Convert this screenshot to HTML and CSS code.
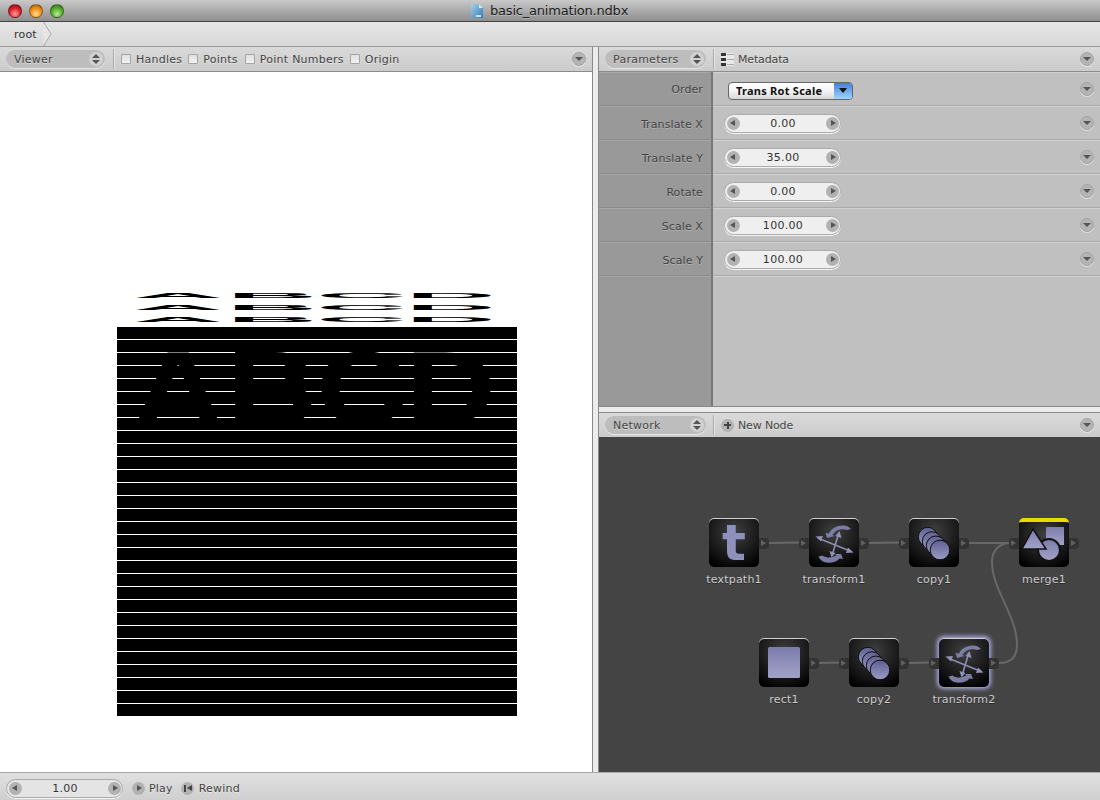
FILE: index.html
```html
<!DOCTYPE html>
<html lang="en">
<head>
<meta charset="utf-8">
<title>basic_animation.ndbx</title>
<link rel="stylesheet" href="styles.css">
</head>
<body>
<svg class="defs" width="0" height="0" aria-hidden="true">
  <defs>
    <linearGradient id="ink" x1="0" y1="0" x2="0" y2="1">
      <stop offset="0" stop-color="#7c7cac"/>
      <stop offset="1" stop-color="#a2a2c8"/>
    </linearGradient>
    <linearGradient id="disc" x1="0" y1="0" x2="0" y2="1">
      <stop offset="0" stop-color="#5f5f92"/>
      <stop offset="1" stop-color="#9c9cc6"/>
    </linearGradient>
    <linearGradient id="doc" x1="0" y1="0" x2="1" y2="1">
      <stop offset="0" stop-color="#a9d0ea"/>
      <stop offset="1" stop-color="#2f7fb5"/>
    </linearGradient>
    <symbol id="i-transform" viewBox="0 0 50 49">
      <g fill="#7c7ca4">
        <path d="M18 20L16.500 15L20 15.500C22 10.500 28 7.500 34 7.500C37 7.500 40 8.500 42 11L38 12C32 10 26 12 23.500 17L25.500 18z"/>
        <path d="M32 36L34 41L30.500 40.500C27 45 19 45.500 15 44C12.500 43 10.500 41 9.500 38.500L13.500 37.500C18 40.500 24 40 27.500 37L25.500 36z"/>
      </g>
      <g fill="none" stroke="#8c8cb4" stroke-width="1.600">
        <path d="M10 20.500L41 33"/>
        <path d="M29.500 16L23.500 36"/>
      </g>
      <g fill="#9090b8">
        <path d="M6.500 18.500L14 18L12 23.500z"/>
        <path d="M44.500 34.500L37 35L39 29.500z"/>
        <path d="M30.500 13L32.500 20L26.500 18z"/>
        <path d="M22.500 39.500L20.500 33L26.500 35z"/>
      </g>
    </symbol>
    <symbol id="i-copy" viewBox="0 0 50 49">
      <g fill="url(#disc)" stroke="#0d0d0d" stroke-width="1">
        <circle cx="18.800" cy="18.800" r="9.500"/>
        <circle cx="22.800" cy="23.200" r="9.500"/>
        <circle cx="26.800" cy="27.500" r="9.500"/>
        <circle cx="31" cy="32" r="9.800"/>
      </g>
    </symbol>
  </defs>
</svg>

<div class="window">
  <header class="titlebar">
    <div class="lights">
      <span class="light light-red"></span>
      <span class="light light-amber"></span>
      <span class="light light-green"></span>
    </div>
    <svg class="doc-icon" width="12" height="15" viewBox="0 0 12 15">
      <path d="M0 1h8l4 4v10H0z" fill="url(#doc)"/>
      <path d="M8 1v4h4z" fill="#d5e8f4"/>
      <path d="M5 12h5v2H5z" fill="#cfe2ef"/>
    </svg>
    <span class="title-text">basic_animation.ndbx</span>
  </header>

  <nav class="pathbar">
    <span class="crumb">root</span>
    <svg class="crumb-sep" width="9" height="24" viewBox="0 0 9 24">
      <path d="M0.500 0L8 12L0.500 24" fill="#e6e6e6" stroke="#a8a8a8"/>
    </svg>
  </nav>

  <main class="panes">
    <section class="pane-left">
      <div class="panehead">
        <div class="select select-viewer"><span>Viewer</span><i class="updown"></i></div>
        <span class="divider"></span>
        <label class="check"><i class="box"></i>Handles</label>
        <label class="check check-tight"><i class="box"></i>Points</label>
        <label class="check"><i class="box"></i>Point Numbers</label>
        <label class="check check-tight"><i class="box"></i>Origin</label>
        <i class="menu-btn menu-end"></i>
      </div>
      <svg class="viewer" width="592" height="700" viewBox="0 72 592 700">
        <rect x="0" y="72" width="592" height="700" fill="#fff"/>
        <rect x="117" y="327" width="400" height="389" fill="#000"/>
        <path class="scanlines" d="M117 339.500H517M117 352.500H517M117 365.500H517M117 378.500H517M117 391.500H517M117 404.500H517M117 417.500H517M117 430.500H517M117 443.500H517M117 456.500H517M117 469.500H517M117 482.500H517M117 495.500H517M117 508.500H517M117 521.500H517M117 534.500H517M117 547.500H517M117 560.500H517M117 573.500H517M117 586.500H517M117 599.500H517M117 612.500H517M117 625.500H517M117 638.500H517M117 651.500H517M117 664.500H517M117 677.500H517M117 690.500H517M117 703.500H517"/>
        <text class="stretch" transform="translate(0 298) scale(1.25 0.075)" x="106.500 181.500 253 324.500">ABCD</text>
        <text class="stretch" transform="translate(0 310) scale(1.25 0.075)" x="106.500 181.500 253 324.500">ABCD</text>
        <text class="stretch" transform="translate(0 322) scale(1.25 0.075)" x="106.500 181.500 253 324.500">ABCD</text>
        <text class="stretch" transform="translate(0 424) scale(1.25 1.03)" x="106.500 181.500 253 324.500">ABCD</text>
      </svg>
    </section>

    <div class="vsplit"></div>

    <section class="pane-right">
      <div class="panehead">
        <div class="select select-params"><span>Parameters</span><i class="updown"></i></div>
        <span class="divider"></span>
        <svg class="meta-icon" width="13" height="13" viewBox="0 0 13 13">
          <rect width="13" height="13" fill="#e8e8e8"/>
          <path d="M0 0h5v3H0zM0 5h5v3H0zM0 10h5v3H0z" fill="#333"/>
          <path d="M6 1h7v1H6zM6 6h7v1H6zM6 11h7v1H6z" fill="#aaa"/>
        </svg>
        <span class="head-label">Metadata</span>
        <i class="menu-btn menu-end"></i>
      </div>

      <div class="params">
        <div class="param">
          <div class="param-label">Order</div>
          <div class="param-value">
            <div class="dropdown"><span>Trans Rot Scale</span><i class="dropdown-arrow"></i></div>
            <i class="menu-btn menu-end"></i>
          </div>
        </div>
        <div class="param">
          <div class="param-label">Translate X</div>
          <div class="param-value">
            <div class="stepper"><i class="round left"></i><span>0.00</span><i class="round right"></i></div>
            <i class="menu-btn menu-end"></i>
          </div>
        </div>
        <div class="param">
          <div class="param-label">Translate Y</div>
          <div class="param-value">
            <div class="stepper"><i class="round left"></i><span>35.00</span><i class="round right"></i></div>
            <i class="menu-btn menu-end"></i>
          </div>
        </div>
        <div class="param">
          <div class="param-label">Rotate</div>
          <div class="param-value">
            <div class="stepper"><i class="round left"></i><span>0.00</span><i class="round right"></i></div>
            <i class="menu-btn menu-end"></i>
          </div>
        </div>
        <div class="param">
          <div class="param-label">Scale X</div>
          <div class="param-value">
            <div class="stepper"><i class="round left"></i><span>100.00</span><i class="round right"></i></div>
            <i class="menu-btn menu-end"></i>
          </div>
        </div>
        <div class="param">
          <div class="param-label">Scale Y</div>
          <div class="param-value">
            <div class="stepper"><i class="round left"></i><span>100.00</span><i class="round right"></i></div>
            <i class="menu-btn menu-end"></i>
          </div>
        </div>
        <div class="param param-fill">
          <div class="param-label"></div>
          <div class="param-value"></div>
        </div>
      </div>

      <div class="hsplit"></div>

      <div class="panehead panehead-net">
        <div class="select select-params"><span>Network</span><i class="updown"></i></div>
        <span class="divider"></span>
        <i class="round plus"></i>
        <span class="head-label">New Node</span>
        <i class="menu-btn menu-end"></i>
      </div>

      <div class="network">
        <svg class="wires" width="501" height="335" viewBox="599 437 501 335">
          <path d="M769 543L799 542.500"/>
          <path d="M869 543L899 542.500"/>
          <path d="M969 543L1009 543"/>
          <path d="M819 663L839 662.500"/>
          <path d="M909 663L929 662.500"/>
          <path d="M999 663C1011 663 1017 657 1017 645C1017 615 992 590 992 562C992 550 1000 543 1010 543"/>
        </svg>

        <div class="node n-textpath">
          <div class="tile">
            <span class="t-glyph">t</span>
            <i class="port port-out"></i>
          </div>
          <span class="node-label">textpath1</span>
        </div>
        <div class="node n-transform1">
          <div class="tile">
            <svg class="glyph" width="50" height="49"><use href="#i-transform"/></svg>
            <i class="port port-in"></i><i class="port port-out"></i>
          </div>
          <span class="node-label">transform1</span>
        </div>
        <div class="node n-copy1">
          <div class="tile">
            <svg class="glyph" width="50" height="49"><use href="#i-copy"/></svg>
            <i class="port port-in"></i><i class="port port-out"></i>
          </div>
          <span class="node-label">copy1</span>
        </div>
        <div class="node n-merge">
          <div class="tile tile-rendered">
            <svg class="glyph" width="50" height="49" viewBox="0 0 50 49">
              <rect x="27" y="9" width="18" height="18" fill="url(#ink)"/>
              <circle cx="30" cy="32" r="11" fill="url(#ink)" stroke="#111" stroke-width="2"/>
              <path d="M3 31L14 11L27 31z" fill="url(#ink)" stroke="#111" stroke-width="1.500"/>
            </svg>
            <i class="port port-in"></i><i class="port port-out"></i>
          </div>
          <span class="node-label">merge1</span>
        </div>
        <div class="node n-rect">
          <div class="tile">
            <svg class="glyph" width="50" height="49" viewBox="0 0 50 49"><rect x="9" y="9" width="32" height="31" rx="1.500" fill="url(#ink)"/></svg>
            <i class="port port-out"></i>
          </div>
          <span class="node-label">rect1</span>
        </div>
        <div class="node n-copy2">
          <div class="tile">
            <svg class="glyph" width="50" height="49"><use href="#i-copy"/></svg>
            <i class="port port-in"></i><i class="port port-out"></i>
          </div>
          <span class="node-label">copy2</span>
        </div>
        <div class="node n-transform2">
          <div class="tile tile-selected">
            <svg class="glyph" width="50" height="49"><use href="#i-transform"/></svg>
            <i class="port port-in"></i><i class="port port-out"></i>
          </div>
          <span class="node-label">transform2</span>
        </div>
      </div>
    </section>
  </main>

  <footer class="bottombar">
    <div class="stepper stepper-frame"><i class="round left"></i><span>1.00</span><i class="round right"></i></div>
    <i class="round right play-btn"></i><span class="foot-label">Play</span>
    <i class="round rewind rewind-btn"></i><span class="foot-label">Rewind</span>
  </footer>
</div>
</body>
</html>
```
FILE: styles.css
```css
* { box-sizing: border-box; }
html, body { margin: 0; padding: 0; }
body {
  width: 1100px;
  height: 800px;
  overflow: hidden;
  font: 11px "DejaVu Sans", sans-serif;
  color: #444;
}
i { display: block; font-style: normal; }
.defs { position: absolute; }

.window { display: flex; flex-direction: column; height: 800px; }

/* title bar */
.titlebar {
  flex: 0 0 22px;
  display: flex;
  align-items: center;
  padding-left: 8px;
  background: linear-gradient(#c9c9c9, #8e8e8e);
  border-bottom: 1px solid #444;
}
.lights { display: flex; gap: 7px; }
.light { width: 14px; height: 14px; border-radius: 50%; border: 1px solid rgba(0,0,0,.35); }
.light-red { background: radial-gradient(circle at 50% 75%, #ff9a9a, #d8202a 55%, #8e0f18); }
.light-amber { background: radial-gradient(circle at 50% 75%, #ffdf8a, #e88c18 55%, #a05a08); }
.light-green { background: radial-gradient(circle at 50% 75%, #b5ee8e, #55a82c 55%, #2e7015); }
.doc-icon { margin-left: 407px; }
.title-text { margin-left: 7px; font-size: 13px; letter-spacing: -.2px; color: #1c1c1c; text-shadow: 0 1px 0 rgba(255,255,255,.3); }

/* breadcrumb */
.pathbar {
  flex: 0 0 25px;
  display: flex;
  align-items: center;
  padding-left: 14px;
  background: linear-gradient(#e6e6e6, #d8d8d8);
  border-bottom: 1px solid #999;
}
.crumb { letter-spacing: .2px; color: #333; }
.crumb-sep { margin-left: 6px; }

/* panes */
.panes { flex: 1; display: flex; min-height: 0; }
.pane-left { flex: 0 0 592px; display: flex; flex-direction: column; }
.vsplit { flex: 0 0 7px; background: #ececec; border-left: 1px solid #888; border-right: 1px solid #888; }
.pane-right { flex: 1; display: flex; flex-direction: column; min-width: 0; }

.panehead {
  flex: 0 0 25px;
  display: flex;
  align-items: center;
  padding-left: 6px;
  background: linear-gradient(#dadada, #cbcbcb);
  border-bottom: 1px solid #8c8c8c;
  letter-spacing: .25px;
  text-shadow: 0 1px 0 rgba(255,255,255,.45);
}
.panehead-net { flex-basis: 24px; border-bottom: 0; }
.select {
  height: 18px;
  display: flex;
  align-items: center;
  justify-content: space-between;
  padding: 0 2px 0 8px;
  border-radius: 9px;
  background: #bdbdbd;
  box-shadow: 0 1px 0 rgba(255,255,255,.5);
}
.select-viewer { width: 99px; }
.select-params { width: 101px; }
.updown {
  position: relative;
  width: 14px;
  height: 14px;
  border-radius: 50%;
  background: #d2d2d2;
}
.updown::before, .updown::after {
  content: "";
  position: absolute;
  left: 3px;
  border-left: 4px solid transparent;
  border-right: 4px solid transparent;
}
.updown::before { top: 2px; border-bottom: 4px solid #555; }
.updown::after { bottom: 2px; border-top: 4px solid #555; }
.divider { width: 1px; height: 20px; margin-left: 8px; background: #aaa; box-shadow: 1px 0 0 #e6e6e6; }
.select-params + .divider { margin-left: 7px; }
.check { display: flex; align-items: center; margin-left: 7px; }
.check-tight { margin-left: 6px; }
.box {
  width: 10px;
  height: 10px;
  margin-right: 5px;
  background: linear-gradient(#e0e0e0, #f2f2f2);
  border: 1px solid #a5a5a5;
  border-radius: 1px;
}
.head-label { margin-left: 4px; letter-spacing: -.15px; }
.meta-icon { margin-left: 7px; }
.menu-btn {
  position: relative;
  flex: none;
  width: 14px;
  height: 14px;
  border-radius: 50%;
  background: #b4b4b4;
  border: 1px solid #a4a4a4;
  box-shadow: 0 1px 0 rgba(255,255,255,.5);
}
.menu-btn::after {
  content: "";
  position: absolute;
  left: 2px;
  top: 4px;
  border-left: 4px solid transparent;
  border-right: 4px solid transparent;
  border-top: 4px solid #555;
}
.menu-end { margin-left: auto; margin-right: 6px; }

.viewer { display: block; }
.scanlines { stroke: #fff; stroke-width: 1; fill: none; }
.stretch { font: bold 100px "Liberation Sans", sans-serif; fill: #000; }

/* parameters */
.params { flex: 1; display: flex; flex-direction: column; min-height: 0; }
.param { flex: 0 0 34px; display: flex; }
.param-fill { flex: 1; }
.param-label {
  flex: 0 0 114px;
  padding: 12px 8px 0 0;
  text-align: right;
  letter-spacing: .1px;
  color: #444;
  text-shadow: 0 1px 0 rgba(255,255,255,.25);
  background: #999;
  border-right: 2px solid #777;
  border-bottom: 1px solid #8a8a8a;
  box-shadow: inset 0 1px 0 #a8a8a8;
}
.param:first-child .param-label { padding-top: 11px; }
.param-value {
  flex: 1;
  display: flex;
  align-items: center;
  padding: 1px 0 0 11px;
  background: #c0c0c0;
  border-bottom: 1px solid #aaa;
  box-shadow: inset 0 1px 0 #d2d2d2;
}
.param-fill .param-label, .param-fill .param-value { border-bottom: 0; }

.dropdown {
  display: flex;
  align-items: center;
  justify-content: space-between;
  flex: none;
  width: 125px;
  height: 18px;
  margin: 3px 0 0 4px;
  padding-left: 7px;
  font: bold 11px "Noto Sans", sans-serif;
  letter-spacing: .25px;
  white-space: nowrap;
  color: #111;
  background: linear-gradient(#fff, #f6f6f6 45%, #d8d8d8);
  border: 1px solid #666;
  border-radius: 4px;
  overflow: hidden;
}
.dropdown-arrow {
  position: relative;
  width: 18px;
  height: 18px;
  background: linear-gradient(#3f78d8, #7ab4f0 60%, #a8d8ff);
}
.dropdown-arrow::after {
  content: "";
  position: absolute;
  left: 5px;
  top: 6px;
  border-left: 4px solid transparent;
  border-right: 4px solid transparent;
  border-top: 5px solid #111;
}

.stepper {
  display: flex;
  flex: none;
  align-items: center;
  justify-content: space-between;
  width: 117px;
  height: 19px;
  padding: 0 1px 0 2px;
  border-radius: 10px;
  background: #efefef;
  border: 1px solid #aaa;
  box-shadow: 0 1px 0 #f4f4f4;
  letter-spacing: .3px;
  color: #333;
}
.stepper-frame { background: #e4e4e4; }
.round {
  position: relative;
  flex: none;
  width: 13px;
  height: 13px;
  border-radius: 50%;
  background: #b2b2b2;
}
.round.left::after, .round.right::after, .round.rewind::after {
  content: "";
  position: absolute;
  top: 3px;
  border-top: 3.5px solid transparent;
  border-bottom: 3.5px solid transparent;
}
.round.left::after { left: 3px; border-right: 5px solid #555; }
.round.right::after { left: 5px; border-left: 5px solid #555; }
.round.rewind::after { left: 6px; border-right: 5px solid #444; }
.round.rewind::before {
  content: "";
  position: absolute;
  left: 3px;
  top: 3px;
  width: 2px;
  height: 7px;
  background: #444;
}
.round.plus { margin-left: 7px; }
.round.plus::before, .round.plus::after {
  content: "";
  position: absolute;
  background: #444;
}
.round.plus::before { left: 3px; top: 5.500px; width: 7px; height: 2px; }
.round.plus::after { left: 5.500px; top: 3px; width: 2px; height: 7px; }

.hsplit { flex: 0 0 7px; background: #ececec; border-top: 1px solid #888; border-bottom: 1px solid #888; }

/* network */
.network { position: relative; flex: 0 0 335px; background: #444; overflow: hidden; }
.wires { position: absolute; left: 0; top: 0; }
.wires path { fill: none; stroke: #686868; stroke-width: 2; }
.node { position: absolute; width: 50px; display: flex; flex-direction: column; align-items: center; }
.n-textpath { left: 110px; top: 81px; }
.n-transform1 { left: 210px; top: 81px; }
.n-copy1 { left: 310px; top: 81px; }
.n-merge { left: 420px; top: 81px; }
.n-rect { left: 160px; top: 201px; }
.n-copy2 { left: 250px; top: 201px; }
.n-transform2 { left: 340px; top: 201px; }
.tile {
  position: relative;
  width: 50px;
  height: 49px;
  border-radius: 5px;
  background: radial-gradient(circle at 50% 28%, #404040, #151515 62%, #000 90%);
  box-shadow: inset 0 1px 0 #cfcfcf;
}
.tile-rendered { border-top: 4px solid #e6dc00; box-shadow: none; }
.tile-rendered .glyph { top: -4px; }
.tile-rendered .port { top: 16px; }
.tile-selected { box-shadow: inset 0 1px 0 #cfcfcf, 0 0 0 1px #8e8ec8, 0 0 4px 2px #a8a8dc; }
.glyph { position: absolute; left: 0; top: 0; }
.t-glyph {
  display: block;
  padding-top: 1px;
  font: bold 50px/48px "DejaVu Sans", sans-serif;
  text-align: center;
  color: #9090bc;
}
.port {
  position: absolute;
  top: 20px;
  width: 10px;
  height: 11px;
  background: #333;
}
.port::after {
  content: "";
  position: absolute;
  top: 2px;
  left: 2px;
  border-top: 3.500px solid transparent;
  border-bottom: 3.500px solid transparent;
  border-left: 5px solid #606060;
}
.port-in { left: -10px; border-radius: 4px 0 0 4px; }
.port-out { right: -10px; border-radius: 0 4px 4px 0; }
.node-label {
  margin-top: 6px;
  white-space: nowrap;
  color: #ccc;
  letter-spacing: .2px;
  text-shadow: 0 1px 0 rgba(0,0,0,.4);
}

/* bottom bar */
.bottombar {
  flex: 0 0 28px;
  display: flex;
  align-items: center;
  padding: 3px 0 0 6px;
  background: linear-gradient(#e0e0e0, #cfcfcf);
  border-top: 1px solid #a8a8a8;
  letter-spacing: .2px;
  text-shadow: 0 1px 0 rgba(255,255,255,.45);
}
.play-btn { margin-left: 9px; }
.rewind-btn { margin-left: 8px; }
.foot-label { margin-left: 4px; }
.rewind-btn + .foot-label { margin-left: 5px; }
```
